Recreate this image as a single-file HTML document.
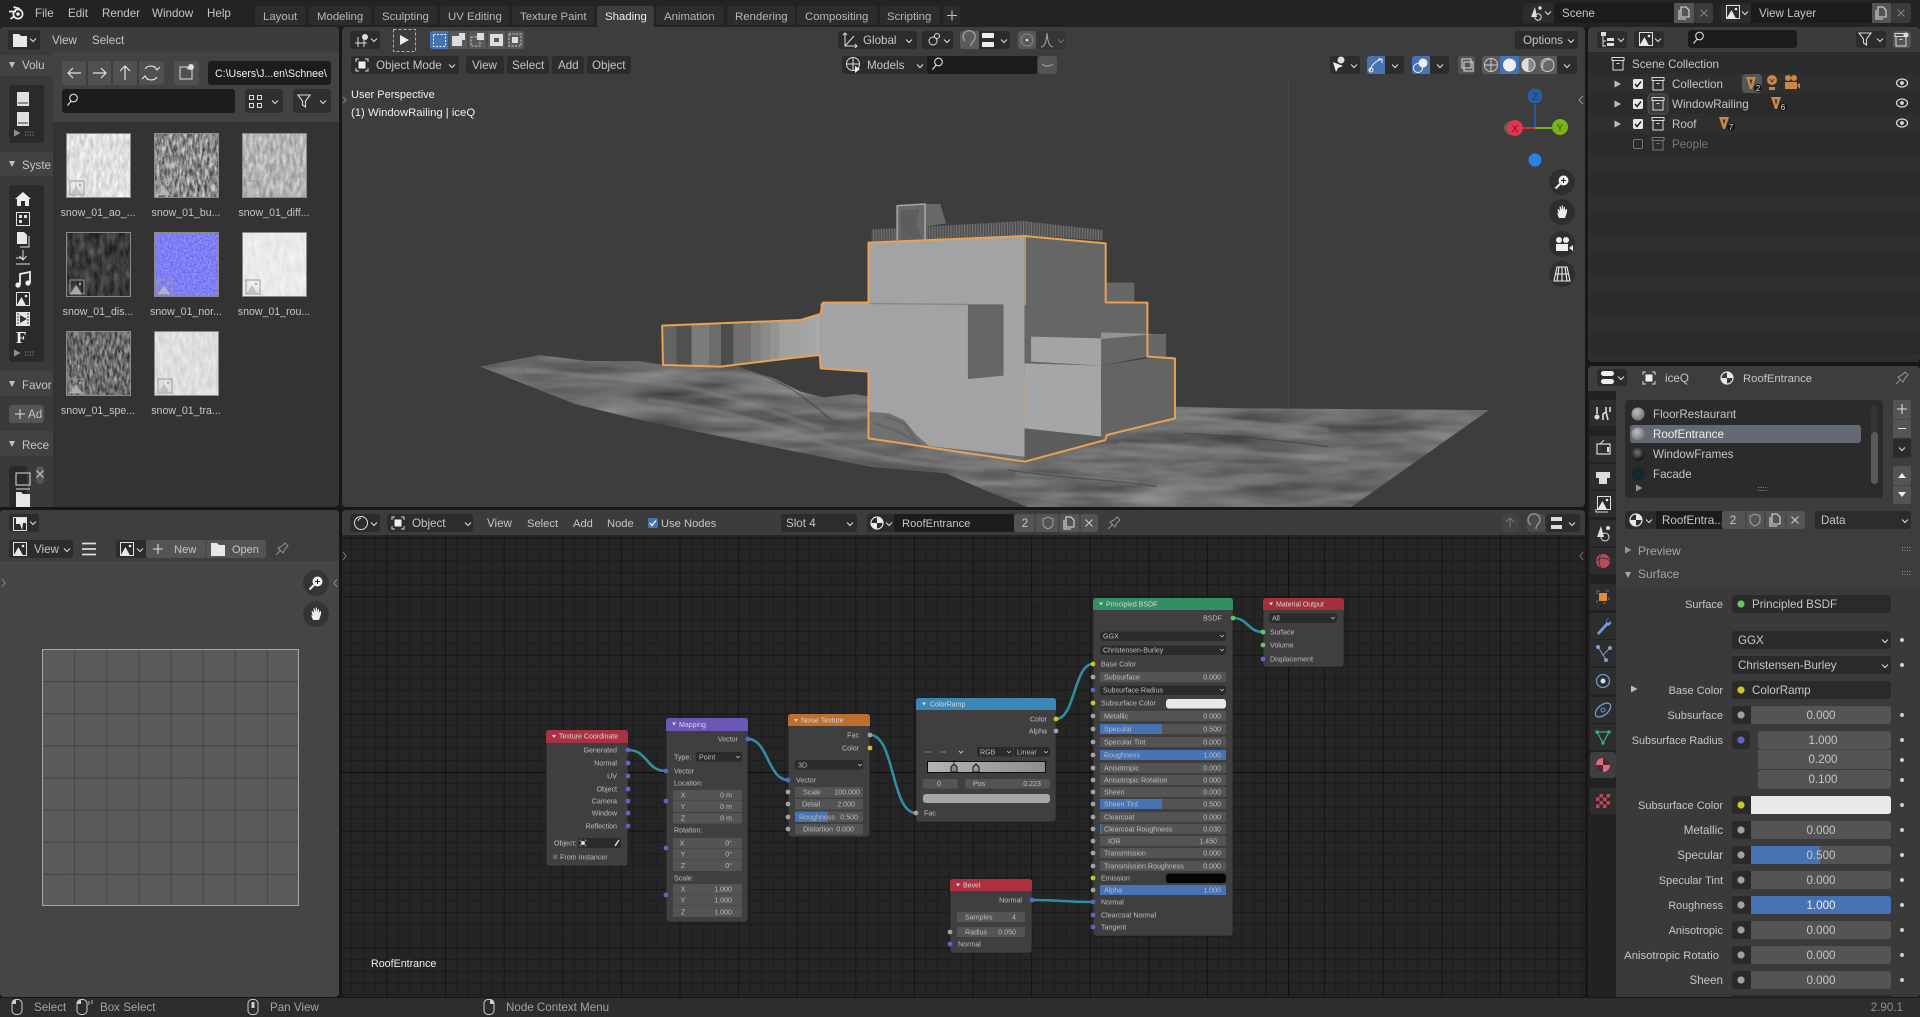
<!DOCTYPE html>
<html lang="en"><head><meta charset="utf-8"><title>Blender Shading</title>
<style>
html,body{margin:0;padding:0;background:#171717;overflow:hidden}
svg{display:block}
text{font-family:"Liberation Sans",sans-serif;font-size:11.6px;fill:#c6c6c6}
.w{fill:#efefef}.g{fill:#a4a4a4}.dim{fill:#777}
.e{text-anchor:end}.m{text-anchor:middle}
.n{font-size:7.1px;fill:#bdbdbd}
.nt{font-size:7px;fill:#d8d8d8}
.tl{font-size:11.4px;fill:#b8b8b8}
.pl text{font-size:11px}
.th text{font-size:10.6px}
.d{fill:#2a2a2a}.f{fill:#1c1c1c}.b{fill:#545454}.u{fill:#4772b3}
.nr{fill:#545454}.nd{fill:#2b2b2b}.nb{fill:#3f3f3f;stroke:#1a1a1a;stroke-width:.6}
.sg{fill:#a1a1a1}.sp{fill:#6363c7}.sy{fill:#c7c729}.sn{fill:#63c763}
.lk{fill:none;stroke:#2f8f9e;stroke-width:2.6}
</style></head><body>
<svg width="1920" height="1017" viewBox="0 0 1920 1017" xmlns="http://www.w3.org/2000/svg">
<defs>
<path id="ch" d="M-3-1.5 0 1.5 3-1.5" fill="none" stroke="#d0d0d0" stroke-width="1.2"/>
<g id="srch"><circle cx="1.5" cy="-2" r="3.8" fill="none" stroke="#d8d8d8" stroke-width="1.1"/><path d="M-.8 1-4.5 5.5" stroke="#d8d8d8" stroke-width="1.2"/></g>
<path id="fun" d="M-6-6H6L1.5 0V6L-1.5 4V0Z" fill="none" stroke="#d8d8d8" stroke-width="1.1"/>
<g id="col"><rect x="-6" y="-6.5" width="12" height="3" fill="none" stroke="#d8d8d8"/><path d="M-5-3.5V6H5V-3.5M-1.5-.5H1.5" fill="none" stroke="#d8d8d8"/></g>
<g id="cold" opacity=".45"><rect x="-6" y="-6.5" width="12" height="3" fill="none" stroke="#d8d8d8"/><path d="M-5-3.5V6H5V-3.5M-1.5-.5H1.5" fill="none" stroke="#d8d8d8"/></g>
<g id="copy"><path d="M-3-6H2L5-3V4H-3Z M-5-3V6H2" fill="none" stroke="#dcdcdc" stroke-width="1.1"/></g>
<path id="x" d="M-3.5-3.5 3.5 3.5M3.5-3.5-3.5 3.5" stroke="#c8c8c8" stroke-width="1.1"/>
<g id="obj"><path d="M-6-3V-6H-3M3-6H6V-3M6 3V6H3M-3 6H-6V3" fill="none" stroke="#dcdcdc" stroke-width="1"/><rect x="-3.5" y="-3.5" width="7" height="7" fill="#eee"/></g>
<g id="img"><rect x="-6.5" y="-6.5" width="13" height="13" fill="none" stroke="#e0e0e0"/><path d="M-6.5 6.5-1.5-2 3 6.5Z" fill="#e8e8e8"/><circle cx="3" cy="-3" r="1.3" fill="#e8e8e8"/></g>
<g id="mat"><circle r="6" fill="none" stroke="#e8e8e8" stroke-width="1.2"/><path d="M0-6A6 6 0 0 1 6 0H0V6A6 6 0 0 1-6 0H0Z" fill="#e8e8e8"/></g>
<g id="tri"><path d="M-5-6H5L1 6H-1Z" fill="#c98849"/><path d="M-1.5-3.5H1.5L0 2Z" fill="#3a3a3a"/></g>
<g id="eye"><ellipse rx="5.5" ry="4" fill="none" stroke="#dcdcdc" stroke-width="1.2"/><circle r="1.9" fill="#dcdcdc"/></g>
<g id="chk"><rect x="-5" y="-5" width="10" height="10" rx="1.5" fill="#e8e8e8"/><path d="M-3 0-1 2.5 3-2.5" fill="none" stroke="#222" stroke-width="1.5"/></g>
<path id="ar" d="M-3-3.5 3.5 0-3-3.5V3.5L3.5 0Z" fill="#bdbdbd"/>
<g id="grip" fill="#9a9a9a"><rect x="-5" y="-2" width="1" height="1"/><rect x="-2.5" y="-2" width="1" height="1"/><rect y="-2" width="1" height="1"/><rect x="2.5" y="-2" width="1" height="1"/><rect x="-5" y="1" width="1" height="1"/><rect x="-2.5" y="1" width="1" height="1"/><rect y="1" width="1" height="1"/><rect x="2.5" y="1" width="1" height="1"/></g>
<g id="mouse"><rect x="-5" y="-7.5" width="10" height="15" rx="4" fill="none" stroke="#cfcfcf"/><path d="M-4.5-3V-5Q-4.5-7-1-7V-3Z" fill="#cfcfcf"/></g>
<g id="pin"><path d="M-6 6-1 1M-4-1 1 4 3 0 6-3 3-6 0-3Z" fill="none" stroke="#8c8c8c" stroke-width="1.1"/></g>
<g id="shield"><path d="M0-6 5-4V0Q5 4 0 6-5 4-5 0V-4Z" fill="none" stroke="#a0a0a0" stroke-width="1"/></g>
<g id="hand"><path d="M-5 1-3 6H3L5 0V-3L4-3 3-1V-5L2-5 1-2V-6.5H0L-.5-2-1.5-6-2.5-5.5-2-1-3.5-3-4.5-2.5-3.5 2Z" fill="#eee"/></g>
<g id="zoomi"><circle cx="1.5" cy="-1.5" r="5" fill="#eee"/><path d="M1.5-4V1M-1-1.5H4" stroke="#222"/><path d="M-2 2-6.5 6.5" stroke="#eee" stroke-width="2"/></g>
<g id="tpl"><rect x="4" y="48" width="14" height="14" fill="none" stroke="#9a9a9a"/><path d="M4 62 10 53 16 62Z" fill="#bbb" opacity=".85"/><circle cx="14" cy="52" r="1.2" fill="#aaa"/></g>
<g id="pf"><rect x="1732" y="-9" width="24" height="18" rx="3" fill="#2a2a2a"/><path d="M1751-9H1888Q1891-9 1891-6V6Q1891 9 1888 9H1751Z" fill="#545454"/><circle cx="1741" r="3.6" fill="#a1a1a1"/><circle cx="1902" r="2" fill="#d0d0d0"/></g>
<pattern id="ngrid" patternUnits="userSpaceOnUse" x="503.7" y="772" width="58.6" height="58.6">
<rect width="58.6" height="58.6" fill="#252525"/>
<path d="M11.7 0V58.6M23.4 0V58.6M35.2 0V58.6M46.9 0V58.6M0 11.7H58.6M0 23.4H58.6M0 35.2H58.6M0 46.9H58.6" stroke="#1c1c1c" stroke-width="1"/>
<path d="M.5 0V58.6M0 .5H58.6" stroke="#141414" stroke-width="1"/></pattern>
<pattern id="imaj" patternUnits="userSpaceOnUse" x="42" y="649" width="32.12" height="32.12"><path d="M.5 0V32.12M0 .5H32.12" stroke="#434343" fill="none"/><path d="M8.5 0V32M16.5 0V32M24.5 0V32M0 8.500H32M0 16.500H32M0 24.500H32" stroke="#555" stroke-width=".6" fill="none"/></pattern>
<pattern id="rail" patternUnits="userSpaceOnUse" width="7" height="20"><rect width="7" height="20" fill="#505050"/><rect width="2.4" height="20" fill="#767676"/></pattern>
<linearGradient id="wing"><stop offset="0" stop-color="#636363"/><stop offset=".09" stop-color="#636363"/><stop offset=".09" stop-color="#505050"/><stop offset=".185" stop-color="#505050"/><stop offset=".185" stop-color="#7b7b7b"/><stop offset=".295" stop-color="#7b7b7b"/><stop offset=".295" stop-color="#6c6c6c"/><stop offset=".37" stop-color="#6c6c6c"/><stop offset=".37" stop-color="#4a4a4a"/><stop offset=".45" stop-color="#4f4f4f"/><stop offset=".45" stop-color="#707070"/><stop offset=".56" stop-color="#707070"/><stop offset=".56" stop-color="#7f7f7f"/><stop offset=".62" stop-color="#7f7f7f"/><stop offset=".62" stop-color="#8a8a8a"/><stop offset=".68" stop-color="#8a8a8a"/><stop offset=".68" stop-color="#949494"/><stop offset=".74" stop-color="#949494"/><stop offset=".74" stop-color="#a0a0a0"/><stop offset=".82" stop-color="#a0a0a0"/><stop offset="1" stop-color="#a8a9aa"/></linearGradient>
<linearGradient id="ramp"><stop offset="0" stop-color="#b4b4b4"/><stop offset="1" stop-color="#8e8e8e"/></linearGradient>
<filter id="terr" x="0" y="0" width="1" height="1" color-interpolation-filters="sRGB"><feTurbulence type="fractalNoise" baseFrequency="0.004 0.022" numOctaves="3" seed="7"/><feGaussianBlur stdDeviation="3 1.500"/><feColorMatrix values=".42 0 0 0 .21 .42 0 0 0 .21 .42 0 0 0 .21 0 0 0 0 1"/><feComposite in2="SourceAlpha" operator="in"/></filter>
<filter id="bl" x="-20%" y="-20%" width="140%" height="140%"><feGaussianBlur stdDeviation="1.3"/></filter>
<filter id="t1" x="0" y="0" width="1" height="1" color-interpolation-filters="sRGB"><feTurbulence type="fractalNoise" baseFrequency="0.3 0.1" numOctaves="4" seed="2"/><feColorMatrix values=".32 0 0 0 .72 .32 0 0 0 .72 .32 0 0 0 .72 0 0 0 0 1"/></filter>
<filter id="t2" x="0" y="0" width="1" height="1" color-interpolation-filters="sRGB"><feTurbulence type="fractalNoise" baseFrequency="0.4 0.13" numOctaves="4" seed="5"/><feColorMatrix values=".95 0 0 0 .07 .95 0 0 0 .07 .95 0 0 0 .07 0 0 0 0 1"/></filter>
<filter id="t3" x="0" y="0" width="1" height="1" color-interpolation-filters="sRGB"><feTurbulence type="fractalNoise" baseFrequency="0.3 0.11" numOctaves="4" seed="8"/><feColorMatrix values=".42 0 0 0 .5 .42 0 0 0 .5 .42 0 0 0 .5 0 0 0 0 1"/></filter>
<filter id="t4" x="0" y="0" width="1" height="1" color-interpolation-filters="sRGB"><feTurbulence type="fractalNoise" baseFrequency="0.2 0.07" numOctaves="4" seed="11"/><feColorMatrix values=".38 0 0 0 .04 .38 0 0 0 .04 .38 0 0 0 .04 0 0 0 0 1"/></filter>
<filter id="t5" x="0" y="0" width="1" height="1" color-interpolation-filters="sRGB"><feTurbulence type="fractalNoise" baseFrequency="0.5" numOctaves="2" seed="3"/><feColorMatrix values=".35 0 0 0 .32 .35 0 0 0 .32 .12 0 0 0 .9 0 0 0 0 1"/></filter>
<filter id="t6" x="0" y="0" width="1" height="1" color-interpolation-filters="sRGB"><feTurbulence type="fractalNoise" baseFrequency="0.2 0.08" numOctaves="3" seed="14"/><feColorMatrix values=".12 0 0 0 .86 .12 0 0 0 .86 .12 0 0 0 .86 0 0 0 0 1"/></filter>
<filter id="t7" x="0" y="0" width="1" height="1" color-interpolation-filters="sRGB"><feTurbulence type="fractalNoise" baseFrequency="0.4 0.13" numOctaves="4" seed="21"/><feColorMatrix values=".8 0 0 0 .02 .8 0 0 0 .02 .8 0 0 0 .02 0 0 0 0 1"/></filter>
<filter id="t8" x="0" y="0" width="1" height="1" color-interpolation-filters="sRGB"><feTurbulence type="fractalNoise" baseFrequency="0.25 0.09" numOctaves="3" seed="31"/><feColorMatrix values=".18 0 0 0 .78 .18 0 0 0 .78 .18 0 0 0 .78 0 0 0 0 1"/></filter>
<radialGradient id="sph" cx=".4" cy=".35" r=".7"><stop offset="0" stop-color="#c0c0c0"/><stop offset="1" stop-color="#707070"/></radialGradient>
<radialGradient id="sphd" cx=".45" cy=".4" r=".6"><stop offset="0" stop-color="#777"/><stop offset="1" stop-color="#111"/></radialGradient>
</defs>

<rect width="1920" height="1017" fill="#171717"/>
<!-- top bar -->
<rect width="1920" height="27" fill="#232323"/>
<g transform="translate(17,13)"><circle cx="1" cy="1" r="4.6" fill="none" stroke="#eee" stroke-width="1.7"/><circle cx="1" cy="1" r="1.8" fill="#eee"/><path d="M-8-1.5H-1M-3.5-6 3-4.2M-6.5 6-2.5 3" stroke="#eee" stroke-width="1.7" fill="none"/></g>
<text x="35" y="17">File</text><text x="68" y="17">Edit</text><text x="102" y="17">Render</text><text x="152" y="17">Window</text><text x="207" y="17">Help</text>
<g fill="#2c2c2c">
<rect x="255" y="6" width="51" height="19" rx="3"/><rect x="309" y="6" width="62" height="19" rx="3"/><rect x="374" y="6" width="63" height="19" rx="3"/><rect x="440" y="6" width="69" height="19" rx="3"/><rect x="512" y="6" width="82" height="19" rx="3"/><rect x="656" y="6" width="68" height="19" rx="3"/><rect x="727" y="6" width="68" height="19" rx="3"/><rect x="797" y="6" width="80" height="19" rx="3"/><rect x="880" y="6" width="60" height="19" rx="3"/><rect x="943" y="6" width="17" height="19" rx="3"/></g>
<path d="M597 27V9Q597 6 600 6H651Q654 6 654 9V27Z" fill="#3d3d3d"/>
<g><text class="tl" x="263" y="20">Layout</text><text class="tl" x="317" y="20">Modeling</text><text class="tl" x="382" y="20">Sculpting</text><text class="tl" x="448" y="20">UV Editing</text><text class="tl" x="520" y="20">Texture Paint</text><text class="w" x="605" y="20" style="font-size:11.4px">Shading</text><text class="tl" x="664" y="20">Animation</text><text class="tl" x="735" y="20">Rendering</text><text class="tl" x="805" y="20">Compositing</text><text class="tl" x="887" y="20">Scripting</text></g>
<path d="M947 15.5H957M952 10.500V20.500" stroke="#c0c0c0" stroke-width="1.1"/>
<!-- scene / view layer -->
<rect x="1523" y="3" width="31" height="20" rx="3" fill="#2c2c2c"/><rect x="1554" y="3" width="120" height="20" fill="#1c1c1c"/><rect x="1674" y="3" width="20" height="20" fill="#545454"/><rect x="1694" y="3" width="19" height="20" rx="3" fill="#3a3a3a"/>
<path d="M1531 17 1535 7 1537 17Z" fill="#ddd"/><circle cx="1540" cy="8" r="1.7" fill="#ddd"/><circle cx="1538" cy="17" r="3.2" fill="none" stroke="#ddd"/><use href="#ch" x="1548" y="13"/>
<text x="1562" y="17">Scene</text><use href="#copy" x="1684" y="13"/><use href="#x" x="1704" y="13" opacity=".5"/>
<rect x="1721" y="3" width="30" height="20" rx="3" fill="#2c2c2c"/><rect x="1751" y="3" width="121" height="20" fill="#1c1c1c"/><rect x="1872" y="3" width="19" height="20" fill="#545454"/><rect x="1891" y="3" width="20" height="20" rx="3" fill="#3a3a3a"/>
<use href="#img" x="1733" y="12"/><use href="#ch" x="1745" y="13"/><text x="1759" y="17">View Layer</text><use href="#copy" x="1881" y="13"/><use href="#x" x="1901" y="13" opacity=".5"/>

<!-- file browser -->
<rect x="0" y="27" width="339" height="480" rx="4" fill="#333"/>
<path d="M0 52V31Q0 27 4 27H335Q339 27 339 31V52Z" fill="#3c3c3c"/>
<rect x="8" y="30" width="32" height="20" rx="3" fill="#2c2c2c"/>
<path d="M13 36V34H19L21 36H27V47H13Z" fill="#e8e8e8"/><use href="#ch" x="33" y="40"/>
<text x="52" y="44">View</text><text x="92" y="44">Select</text>
<rect x="53" y="52" width="286" height="70" fill="#424242"/>
<rect x="0" y="52" width="53" height="455" fill="#3a3a3a"/>
<g fill="#424242"><rect y="55" width="53" height="21"/><rect y="152" width="53" height="24"/><rect y="371" width="53" height="25"/><rect y="431" width="53" height="25"/></g>
<path d="M9 62H15L12 68Z M9 161H15L12 167Z M9 381H15L12 387Z M9 441H15L12 447Z" fill="#c0c0c0"/>
<text x="22" y="69">Volu</text><text x="22" y="169">Syste</text><text x="22" y="389">Favor</text><text x="22" y="449">Rece</text>
<rect x="9" y="85" width="35" height="58" rx="3" fill="#2a2a2a"/>
<g fill="#e0e0e0"><path d="M17 92H29V106H17Z"/><path d="M17 112H29V126H17Z"/></g><path d="M18 103H28M18 123H28" stroke="#333"/>
<use href="#ar" x="17" y="133" opacity=".7"/><use href="#grip" x="30" y="133.500"/>
<rect x="9" y="185" width="35" height="177" rx="3" fill="#2a2a2a"/>
<path d="M23 192 31 199H29V206H25V201H21V206H17V199H15Z" fill="#eee"/>
<g fill="none" stroke="#e0e0e0"><rect x="16.500" y="212.500" width="13" height="13"/><path d="M16 258 23 258M23 250V260M19.500 256 23 260 26.500 256M16 264H30"/></g><path d="M19 215H22V218H19ZM19 220H22V223H19ZM24 215H27V218H24Z" fill="#e0e0e0"/>
<path d="M17 232H24L27 235V244H17Z" fill="#e8e8e8"/><path d="M29 236V247H20" fill="none" stroke="#e0e0e0"/>
<path d="M20 285V274L30 272V283" fill="none" stroke="#eee" stroke-width="1.8"/><circle cx="18" cy="285" r="2.600" fill="#eee"/><circle cx="28" cy="283" r="2.600" fill="#eee"/>
<use href="#img" x="23" y="299"/>
<rect x="16" y="312" width="14" height="14" fill="#e6e6e6"/><path d="M20 315V323L27 319Z" fill="#333"/><path d="M18 313V325M28 313V325" stroke="#333" stroke-dasharray="2 1"/>
<text x="16" y="343" style="font-family:'Liberation Serif',serif;font-size:17px;font-weight:bold" class="w">F</text>
<use href="#ar" x="17" y="353" opacity=".7"/><use href="#grip" x="30" y="353.500"/>
<rect x="9" y="405" width="35" height="18" rx="3" fill="#545454"/><path d="M15 414H25M20 409V419" stroke="#ddd"/><text x="28" y="418">Ad</text>
<rect x="9" y="466" width="18" height="41" rx="3" fill="#2a2a2a"/><rect x="36" y="466" width="8" height="18" rx="4" fill="#555"/><use href="#x" x="40" y="474"/>
<rect x="16" y="473" width="14" height="12" fill="none" stroke="#e0e0e0"/><path d="M16 489H30" stroke="#e0e0e0"/><path d="M16 494V492H21L23 494H30V507H16Z" fill="#e8e8e8"/>
<!-- path bar -->
<rect x="62" y="61" width="102" height="24" rx="3" fill="#505050"/><path d="M87 61V85M112 61V85M138 61V85" stroke="#2b2b2b"/>
<path d="M81 73H68M73 68 68 73 73 78M93 73H106M101 68 106 73 101 78M125 80V66M120 71 125 66 130 71" fill="none" stroke="#e0e0e0" stroke-width="1.200"/>
<path d="M145 69A7 7 0 0 1 157 70M157 77A7 7 0 0 1 145 76M154 66 157 70 160 67M148 80 145 76 142 79" fill="none" stroke="#e0e0e0" stroke-width="1.100"/>
<rect x="174" y="61" width="25" height="24" rx="3" fill="#505050"/><path d="M180 67H187L188 69H192V79H180Z" fill="none" stroke="#ddd"/><circle cx="191" cy="67" r="3" fill="#ddd"/>
<rect x="208" y="61" width="123" height="24" rx="3" fill="#1c1c1c"/><text x="215" y="77" class="w" style="font-size:10.600px">C:\Users\J...en\Schnee\</text>
<rect x="62" y="89" width="173" height="24" rx="3" fill="#1c1c1c"/><use href="#srch" x="72" y="100"/>
<rect x="245" y="89" width="38" height="24" rx="3" fill="#303030"/><g fill="none" stroke="#ddd"><rect x="249.500" y="95.500" width="4" height="4"/><rect x="257.500" y="95.500" width="4" height="4"/><rect x="249.500" y="103.500" width="4" height="4"/><rect x="257.500" y="103.500" width="4" height="4"/></g><use href="#ch" x="275" y="102"/>
<rect x="293" y="89" width="38" height="24" rx="3" fill="#303030"/><use href="#fun" x="304" y="101"/><use href="#ch" x="323" y="102"/>
<!-- thumbs -->
<g>
<rect x="66" y="133" width="65" height="65" filter="url(#t1)"/><rect x="154" y="133" width="65" height="65" filter="url(#t2)"/><rect x="242" y="133" width="65" height="65" filter="url(#t3)"/>
<rect x="66" y="232" width="65" height="65" filter="url(#t4)"/><rect x="154" y="232" width="65" height="65" filter="url(#t5)"/><rect x="242" y="232" width="65" height="65" filter="url(#t6)"/>
<rect x="66" y="331" width="65" height="65" filter="url(#t7)"/><rect x="154" y="331" width="65" height="65" filter="url(#t8)"/>
</g>
<g fill="none" stroke="#8a8a8a"><rect x="66.500" y="133.500" width="64" height="64"/><rect x="154.500" y="133.500" width="64" height="64"/><rect x="242.500" y="133.500" width="64" height="64"/><rect x="66.500" y="232.500" width="64" height="64"/><rect x="154.500" y="232.500" width="64" height="64"/><rect x="242.500" y="232.500" width="64" height="64"/><rect x="66.500" y="331.500" width="64" height="64"/><rect x="154.500" y="331.500" width="64" height="64"/></g>
<use href="#tpl" x="66" y="133"/><use href="#tpl" x="154" y="133"/><use href="#tpl" x="242" y="133"/><use href="#tpl" x="66" y="232"/><use href="#tpl" x="154" y="232"/><use href="#tpl" x="242" y="232"/><use href="#tpl" x="66" y="331"/><use href="#tpl" x="154" y="331"/>
<g class="th"><text class="m" x="98" y="216">snow_01_ao_...</text><text class="m" x="186" y="216">snow_01_bu...</text><text class="m" x="274" y="216">snow_01_diff...</text><text class="m" x="98" y="315">snow_01_dis...</text><text class="m" x="186" y="315">snow_01_nor...</text><text class="m" x="274" y="315">snow_01_rou...</text><text class="m" x="98" y="414">snow_01_spe...</text><text class="m" x="186" y="414">snow_01_tra...</text></g>

<!-- 3D viewport -->
<clipPath id="vp"><rect x="342" y="27" width="1243" height="480" rx="4"/></clipPath>
<g clip-path="url(#vp)">
<rect x="342" y="27" width="1243" height="480" fill="#3d3d3d"/>
<path d="M1288.500 80V507" stroke="#454545"/>
<g transform="translate(640,190) scale(.38265,.33333)">
<path d="M-418 530-264 495-136 513 0 513 60 525 260 530 350 565 420 605 480 622 560 612 600 620 1398 650 1568 655 2219 660 1848 960 1032 960 900 900 800 850 600 830 300 760 0 690-170 642Z" fill="#707070" filter="url(#terr)"/>
<path d="M-300 540Q-100 560 120 590 300 640 480 720M20 630Q250 660 480 760 700 830 900 840M1420 680Q1600 700 1800 720M1250 760Q1500 780 1850 810M980 850Q1150 860 1300 880" fill="none" stroke="#8d8d8d" stroke-width="14" opacity=".35" filter="url(#bl)"/>
<path d="M265 532Q330 555 400 600 450 640 500 690M960 840Q1080 860 1200 870 1300 880 1350 890M1420 730Q1600 740 1800 770" fill="none" stroke="#3e3e3e" stroke-width="4" opacity=".6"/>
<path d="M605 118 670 115 1000 93 1210 120V152L1005 135 605 155Z" fill="url(#rail)"/>
<path d="M672 47 745 42 785 42 800 100 745 110V150H672Z" fill="#696969"/>
<path d="M682 62 730 58 722 100 738 150H682Z" fill="#5d5d5d"/>
<path d="M672 150V47L745 42V150" fill="none" stroke="#a9a9a9" stroke-width="1.500" vector-effect="non-scaling-stroke"/>
<path d="M1217 278H1292V338H1217Z" fill="#676767"/>
<path d="M1326 432H1375V500H1326Z" fill="#676767"/>
<path d="M472 340 597 337V158L1005 138V810L597 745V545L472 535Z" fill="#a1a3a4"/>
<path d="M1005 138 1217 160V337L1326 338V500L1205 527 1005 520Z" fill="#666"/>
<path d="M1005 520 1205 527V740L1005 715Z" fill="#a4a6a7"/>
<path d="M1205 527 1326 505 1398 505V685L1220 735 1205 740Z" fill="#646464"/>
<path d="M1022 440 1205 445V527L1022 515Z" fill="#a2a4a5"/>
<path d="M1205 427 1345 432 1205 447Z" fill="#949494"/>
<path d="M1005 715 1205 740 1216 750 1005 812Z" fill="#5d5d5d"/>
<path d="M857 343H950V557L857 567Z" fill="#656565"/>
<path d="M600 341 857 343" stroke="#7e7e7e" stroke-width="1" vector-effect="non-scaling-stroke"/>
<path d="M58 407 420 390 472 372V495L390 505 210 530 60 525Z" fill="url(#wing)"/>
<path d="M597 665 650 670 690 690 722 735 755 768 1005 800V812L597 745Z" fill="#707070"/>
<path d="M640 680 690 700 720 750M610 700Q680 720 740 770" stroke="#5a5a5a" stroke-width="5" fill="none" opacity=".6"/>
<path d="M58 407 420 390 472 372 478 338 597 337V158L1005 138 1217 160V337L1326 338V500L1398 505V685L1220 735 1216 750 1005 815 597 745V545L472 535 470 495 390 505 210 530 60 525Z" fill="none" stroke="#e8a155" stroke-width="2" stroke-linejoin="round" vector-effect="non-scaling-stroke"/>
<path d="M1007 138V345M1007 560V690" stroke="#e8a155" stroke-width="1.200" vector-effect="non-scaling-stroke" opacity=".9"/>
</g>
<!-- viewport text -->
<text class="w" x="351" y="98" style="font-size:11px">User Perspective</text><text class="w" x="351" y="116" style="font-size:11.300px">(1) WindowRailing | iceQ</text>
<path d="M343 97l3 3-3 3" stroke="#888" fill="none"/>
<!-- header row 1 -->
<rect x="350" y="31" width="30" height="18" rx="3" fill="#2c2c2c"/>
<path d="M355 43H367M358 37V47M364 37V47" stroke="#ddd"/><circle cx="365" cy="37" r="3" fill="#ddd"/><use href="#ch" x="374" y="40"/>
<rect x="393.500" y="29.500" width="22" height="22" fill="none" stroke="#e9a84f" stroke-dasharray="3 2"/><path d="M400 35V45L409 40Z" fill="#eee"/>
<rect x="430" y="31" width="94" height="18" rx="3" fill="#595959"/><path d="M433 31H449V49H433Q430 49 430 46V34Q430 31 433 31Z" fill="#4772b3"/>
<path d="M449 31V49M468 31V49M487 31V49M506 31V49" stroke="#3a3a3a"/>
<rect x="433.500" y="34.500" width="12" height="12" fill="none" stroke="#eee" stroke-dasharray="2 1.500"/>
<path d="M452 36H459V33H465V40H462V46H452Z" fill="#ddd"/>
<rect x="471" y="37" width="9" height="9" fill="none" stroke="#ccc" stroke-dasharray="2 1.500"/><rect x="477" y="33" width="7" height="7" fill="#ddd"/>
<rect x="490" y="34" width="13" height="12" fill="#ddd"/><rect x="494" y="38" width="5" height="4" fill="#595959"/>
<rect x="509" y="34" width="12" height="12" fill="none" stroke="#ccc" stroke-dasharray="2 1.500"/><rect x="512" y="37" width="6" height="6" fill="#ddd"/>
<rect x="838" y="31" width="79" height="18" rx="3" fill="#2c2c2c"/><path d="M845 33V46H857M845 46 854 36M843 35 845 33 847 35M855 44 857 46 855 48" fill="none" stroke="#ddd"/><text x="863" y="44">Global</text><use href="#ch" x="909" y="41"/>
<rect x="922" y="31" width="31" height="18" rx="3" fill="#2c2c2c"/><circle cx="933" cy="41" r="4" fill="none" stroke="#ddd"/><circle cx="937" cy="36" r="2.500" fill="none" stroke="#ddd"/><use href="#ch" x="947" y="41"/>
<rect x="960" y="31" width="50" height="18" rx="3" fill="#2c2c2c"/><path d="M963 31H979V49H963Q960 49 960 46V34Q960 31 963 31Z" fill="#5c5c5c"/><path d="M965 41A6 6 0 1 1 975 38C975 41 971 42 971 46" fill="none" stroke="#a0a0a0" stroke-width="1.300"/><rect x="982" y="33" width="12" height="5" fill="#eee"/><rect x="982" y="42" width="12" height="5" fill="#eee"/><use href="#ch" x="1004" y="41"/>
<rect x="1018" y="31" width="18" height="18" rx="3" fill="#595959"/><circle cx="1027" cy="40" r="6" fill="none" stroke="#888" stroke-width="1.100"/><circle cx="1027" cy="40" r="1.300" fill="#ddd"/>
<rect x="1036" y="31" width="30" height="18" rx="3" fill="#363636"/><path d="M1041 47Q1046 47 1047 33 1048 47 1053 47" fill="none" stroke="#aaa"/><use href="#ch" x="1061" y="41" opacity=".35"/>
<rect x="1515" y="31" width="63" height="18" rx="3" fill="#2c2c2c"/><text x="1523" y="44">Options</text><use href="#ch" x="1571" y="41"/>
<!-- header row 2 -->
<rect x="351" y="56" width="108" height="18" rx="3" fill="#2c2c2c"/><use href="#obj" x="362" y="65"/><text x="376" y="69">Object Mode</text><use href="#ch" x="452" y="66"/>
<rect x="466" y="56" width="38" height="18" rx="3" fill="#2c2c2c"/><text x="472" y="69">View</text>
<rect x="507" y="56" width="42" height="18" rx="3" fill="#2c2c2c"/><text x="512" y="69">Select</text>
<rect x="552" y="56" width="32" height="18" rx="3" fill="#2c2c2c"/><text x="558" y="69">Add</text>
<rect x="587" y="56" width="44" height="18" rx="3" fill="#2c2c2c"/><text x="592" y="69">Object</text>
<rect x="842" y="56" width="85" height="18" rx="3" fill="#2c2c2c"/><circle cx="853" cy="64" r="6.500" fill="none" stroke="#ddd"/><path d="M846.500 64H859.500M853 57.500V70.500" stroke="#ddd"/><path d="M855 66V73L860 69Z" fill="#eee"/><text x="867" y="69">Models</text><use href="#ch" x="920" y="66"/>
<rect x="927" y="56" width="110" height="18" fill="#1c1c1c"/><use href="#srch" x="937" y="64"/>
<rect x="1038" y="56" width="19" height="18" rx="3" fill="#545454"/><path d="M1042 64Q1047 68 1053 64" fill="none" stroke="#aaa"/>
<rect x="1330" y="56" width="30" height="18" rx="3" fill="#2c2c2c"/><circle cx="1341" cy="60" r="3.500" fill="#ddd"/><path d="M1333 62 1343 66 1338 68 1336 72Z" fill="#eee"/><use href="#ch" x="1354" y="66"/>
<rect x="1367" y="56" width="37" height="18" rx="3" fill="#2c2c2c"/><path d="M1370 56H1385V74H1370Q1367 74 1367 71V59Q1367 56 1370 56Z" fill="#4772b3"/><path d="M1370 71Q1372 62 1382 59M1382 59H1378M1382 59V63" fill="none" stroke="#eee"/><circle cx="1371" cy="70" r="2" fill="none" stroke="#eee"/><use href="#ch" x="1395" y="66"/>
<rect x="1412" y="56" width="37" height="18" rx="3" fill="#2c2c2c"/><path d="M1415 56H1430V74H1415Q1412 74 1412 71V59Q1412 56 1415 56Z" fill="#4772b3"/><circle cx="1423" cy="63" r="4.500" fill="#eee"/><circle cx="1418" cy="68" r="4.500" fill="none" stroke="#eee"/><use href="#ch" x="1440" y="66"/>
<rect x="1458" y="56" width="17" height="18" rx="3" fill="#545454"/><rect x="1462" y="59" width="9" height="9" fill="none" stroke="#ddd"/><rect x="1464" y="62" width="9" height="9" fill="none" stroke="#ddd"/>
<rect x="1482" y="56" width="95" height="18" rx="3" fill="#2c2c2c"/><path d="M1485 56H1557V74H1485Q1482 74 1482 71V59Q1482 56 1485 56Z" fill="#595959"/><rect x="1500" y="56" width="19" height="18" fill="#4772b3"/>
<circle cx="1491" cy="65" r="6.500" fill="none" stroke="#ccc"/><path d="M1484.500 65H1497.500M1491 58.500V71.500" stroke="#ccc"/><circle cx="1509.500" cy="65" r="6.500" fill="#f0f0f0"/>
<circle cx="1528.500" cy="65" r="6.500" fill="#888" stroke="#ddd"/><path d="M1528.500 58.500A6.500 6.500 0 0 0 1528.500 71.500Z" fill="#ddd"/><circle cx="1547.500" cy="65" r="6.500" fill="#666" stroke="#ccc"/><path d="M1543 68A6 6 0 0 1 1550 60" fill="none" stroke="#ccc"/>
<use href="#ch" x="1567" y="66"/>
<!-- gizmo -->
<path d="M1535 128V104" stroke="#2a5a9a" stroke-width="2"/><path d="M1535 128H1520" stroke="#c33" stroke-width="2"/><path d="M1535 128H1552" stroke="#7ab317" stroke-width="2"/>
<circle cx="1511" cy="128" r="7" fill="#6e5a4a"/><circle cx="1535" cy="96" r="7.500" fill="#2c5d9e"/><circle cx="1515" cy="128" r="8" fill="#e0364e"/><circle cx="1560" cy="127" r="8" fill="#79b516"/><circle cx="1535" cy="160" r="6.500" fill="#2a80e4"/>
<text class="m" x="1535" y="100" style="font-size:10px;fill:#1a3a66">Z</text><text class="m" x="1515" y="132" style="font-size:10px;fill:#7a1020">X</text><text class="m" x="1560" y="131" style="font-size:10px;fill:#3c5c08">Y</text>
<g fill="#2e2e2e"><circle cx="1562" cy="182" r="13"/><circle cx="1562" cy="212" r="13"/><circle cx="1562" cy="244" r="13"/><circle cx="1562" cy="274" r="13"/></g>
<use href="#zoomi" x="1562" y="182"/><use href="#hand" x="1562" y="212"/>
<g fill="#eee"><circle cx="1559" cy="240" r="3"/><circle cx="1566" cy="240" r="3"/><rect x="1556" y="244" width="12" height="7"/><path d="M1569 248 1573 245V251Z"/></g>
<path d="M1557 267H1567L1570 281H1554ZM1562 267V281M1555.500 274H1568.500M1559 267 1557 281M1565 267 1567 281" fill="none" stroke="#eee" stroke-width="1.100"/>
<path d="M1583 96 1579 100 1583 104" stroke="#999" fill="none"/>
</g>

<!-- outliner -->
<clipPath id="ol"><rect x="1588" y="27" width="332" height="335" rx="4"/></clipPath>
<g clip-path="url(#ol)">
<rect x="1588" y="27" width="332" height="335" fill="#2b2b2b"/>
<rect x="1588" y="27" width="332" height="25" fill="#3c3c3c"/>
<g fill="#2f2f2f"><rect x="1588" y="74" width="332" height="20"/><rect x="1588" y="114" width="332" height="20"/><rect x="1588" y="154" width="332" height="20"/><rect x="1588" y="194" width="332" height="20"/><rect x="1588" y="234" width="332" height="20"/><rect x="1588" y="274" width="332" height="20"/><rect x="1588" y="314" width="332" height="20"/><rect x="1588" y="354" width="332" height="20"/></g>
</g>
<rect x="1597" y="31" width="30" height="17" rx="3" fill="#2c2c2c"/><rect x="1601" y="32" width="5" height="4" fill="#ddd"/><path d="M1603 36V46H1606M1603 41H1606" stroke="#ddd" fill="none"/><rect x="1607" y="38" width="7" height="3" fill="#ddd"/><rect x="1607" y="43" width="7" height="3" fill="#ddd"/><use href="#ch" x="1621" y="40"/>
<rect x="1634" y="31" width="30" height="17" rx="3" fill="#2c2c2c"/><use href="#img" x="1646" y="39"/><use href="#ch" x="1658" y="40"/>
<rect x="1688" y="30" width="109" height="18" rx="3" fill="#1c1c1c"/><use href="#srch" x="1698" y="38"/>
<rect x="1856" y="31" width="30" height="17" rx="3" fill="#2c2c2c"/><use href="#fun" x="1865" y="39"/><use href="#ch" x="1880" y="40"/>
<rect x="1893" y="31" width="18" height="17" rx="3" fill="#545454"/><use href="#col" x="1901" y="40"/><circle cx="1906" cy="35" r="2.500" fill="#ddd"/>
<use href="#col" x="1618" y="64"/><text x="1632" y="68">Scene Collection</text>
<use href="#ar" x="1617.500" y="84"/><use href="#ar" x="1617.500" y="104"/><use href="#ar" x="1617.500" y="124"/>
<use href="#chk" x="1638" y="84"/><use href="#chk" x="1638" y="104"/><use href="#chk" x="1638" y="124"/><rect x="1633.500" y="139.500" width="9" height="9" rx="1.500" fill="none" stroke="#777"/>
<rect x="1648" y="94" width="20" height="20" rx="4" fill="#3a3a3a" stroke="#555"/>
<use href="#col" x="1658" y="84"/><use href="#col" x="1658" y="104"/><use href="#col" x="1658" y="124"/><use href="#cold" x="1658" y="144"/>
<text x="1672" y="88">Collection</text><text x="1672" y="108">WindowRailing</text><text x="1672" y="128">Roof</text><text class="dim" x="1672" y="148">People</text>
<rect x="1742" y="74" width="20" height="19" rx="4" fill="#555"/>
<use href="#tri" x="1751" y="83"/><use href="#tri" x="1776" y="103"/><use href="#tri" x="1724" y="123"/>
<circle cx="1758" cy="88" r="4" fill="#161616"/><circle cx="1783" cy="107" r="4" fill="#161616"/><circle cx="1731" cy="127" r="4" fill="#161616"/>
<text class="m" x="1758" y="91" style="font-size:8px;fill:#ddd">2</text><text class="m" x="1783" y="110" style="font-size:8px;fill:#ddd">6</text><text class="m" x="1731" y="130" style="font-size:8px;fill:#ddd">7</text>
<circle cx="1772" cy="80" r="5" fill="#c98849"/><path d="M1769 87H1775V90H1769Z" fill="#c98849"/><path d="M1770 79 1772 82 1774 79" stroke="#3a3a3a" fill="none"/>
<circle cx="1788" cy="78" r="3" fill="#c98849"/><circle cx="1794" cy="78" r="3" fill="#c98849"/><rect x="1785" y="82" width="12" height="7" fill="#c98849"/><path d="M1797 85 1800 83V89Z" fill="#c98849"/>
<use href="#eye" x="1902" y="83"/><use href="#eye" x="1902" y="103"/><use href="#eye" x="1902" y="123"/>

<!-- properties -->
<clipPath id="pr"><rect x="1588" y="366" width="332" height="631" rx="4"/></clipPath>
<g clip-path="url(#pr)">
<rect x="1588" y="366" width="332" height="631" fill="#3d3d3d"/>
<rect x="1588" y="391" width="28" height="606" fill="#222"/>
<g fill="#2d2d2d"><rect x="1590" y="400" width="26" height="26"/><rect x="1590" y="436" width="26" height="26"/><rect x="1590" y="464" width="26" height="26"/><rect x="1590" y="491" width="26" height="26"/><rect x="1590" y="520" width="26" height="26"/><rect x="1590" y="548" width="26" height="26"/><rect x="1590" y="584" width="26" height="26"/><rect x="1590" y="613" width="26" height="26"/><rect x="1590" y="640" width="26" height="26"/><rect x="1590" y="668" width="26" height="26"/><rect x="1590" y="697" width="26" height="26"/><rect x="1590" y="724" width="26" height="26"/><rect x="1590" y="788" width="26" height="26"/></g>
<rect x="1590" y="752" width="26" height="26" rx="3" fill="#3f3f3f"/>
<rect x="1616" y="587" width="304" height="410" fill="#3a3a3a"/>
</g>
<use href="#obj" x="1649" y="378"/><text x="1665" y="382">iceQ</text><use href="#mat" x="1727" y="378"/><text x="1743" y="382" style="font-size:11.300px">RoofEntrance</text><use href="#pin" x="1902" y="378"/>
<rect x="1597" y="369" width="30" height="17" rx="3" fill="#2c2c2c"/><rect x="1601" y="371" width="13" height="5" rx="2.500" fill="#eee"/><rect x="1601" y="379" width="13" height="5" rx="2.500" fill="#eee"/><use href="#ch" x="1621" y="378"/>
<!-- tab icons -->
<path d="M1597 407V414M1606 407V412L1603 414 1603 420M1606 412 1608 420M1610 407V412" stroke="#ddd" stroke-width="1.600" fill="none"/><circle cx="1597" cy="417" r="2.500" fill="#ddd"/>
<rect x="1597" y="444" width="13" height="10" fill="none" stroke="#ddd" stroke-width="1.200"/><path d="M1600 444 1604 440" stroke="#ddd"/><path d="M1607 447H1609V452H1607Z" fill="#ddd"/>
<path d="M1596 472H1610V478H1607V484H1599V478H1596Z" fill="#ddd"/>
<use href="#img" x="1604" y="503"/><path d="M1596 509V512H1608" stroke="#ddd" fill="none"/>
<path d="M1597 537 1601 526 1604 537Z" fill="#ddd"/><circle cx="1608" cy="528" r="2" fill="#ddd"/><circle cx="1605" cy="537" r="4" fill="none" stroke="#ddd"/>
<circle cx="1603" cy="561" r="7" fill="#b54c5c"/><path d="M1596 561Q1603 555 1610 561M1601 554Q1597 561 1601 568" stroke="#3a3a3a" fill="none"/>
<path d="M1597 591H1609V603H1597Z" fill="none" stroke="#8a6a4a" stroke-dasharray="3 6"/><rect x="1599" y="593" width="8" height="8" fill="#e08b40"/>
<path d="M1597 633 1606 623A4 4 0 0 1 1609 618L1606 621 1608 623 1611 621A4 4 0 0 1 1607 626L1599 635Z" fill="#6f9bd8"/>
<path d="M1598 647 1603 655 1610 648M1603 655 1606 660" stroke="#7fa0c8" fill="none"/><g fill="#7fa0c8"><circle cx="1598" cy="647" r="2"/><circle cx="1610" cy="648" r="2"/><circle cx="1606" cy="660" r="2"/></g>
<circle cx="1603" cy="681" r="6.500" fill="none" stroke="#6f9bd8" stroke-width="1.300"/><circle cx="1603" cy="681" r="2.500" fill="#cde"/>
<g transform="rotate(-40 1603 710)"><ellipse cx="1603" cy="710" rx="9" ry="5" fill="none" stroke="#6f9bd8" stroke-width="1.300"/><circle cx="1603" cy="710" r="2" fill="none" stroke="#6f9bd8"/></g>
<path d="M1597 732H1609L1603 743Z" fill="none" stroke="#3cb08c" stroke-width="1.200"/><g fill="#3cb08c"><rect x="1595.500" y="730.500" width="3" height="3"/><rect x="1607.500" y="730.500" width="3" height="3"/><rect x="1601.500" y="741.500" width="3" height="3"/></g>
<circle cx="1603" cy="765" r="7" fill="#e06b7c"/><path d="M1603 765V772A7 7 0 0 1 1596 765ZM1603 765H1610A7 7 0 0 0 1603 758Z" fill="#4a2a30"/>
<rect x="1596" y="794" width="14" height="14" fill="#b54c5c"/><path d="M1596 794h3.500v3.500h-3.500zM1603 794h3.500v3.500h-3.500zM1599.500 797.500h3.500v3.500h-3.500zM1606.500 797.500h3.500v3.500h-3.500zM1596 801h3.500v3.500h-3.500zM1603 801h3.500v3.500h-3.500zM1599.500 804.500h3.500v3.500h-3.500zM1606.500 804.500h3.500v3.500h-3.500z" fill="#3a2226"/>
<!-- material list -->
<rect x="1625" y="400" width="258" height="98" rx="4" fill="#2b2b2b"/>
<rect x="1630" y="425" width="231" height="18" rx="3" fill="#646a73"/>
<circle cx="1638" cy="414" r="6.500" fill="url(#sph)"/><circle cx="1638" cy="434" r="6.500" fill="url(#sph)"/><circle cx="1638" cy="454" r="6.500" fill="url(#sphd)"/><circle cx="1638" cy="474" r="6.500" fill="#15262e"/>
<text x="1653" y="418">FloorRestaurant</text><text class="w" x="1653" y="438">RoofEntrance</text><text x="1653" y="458">WindowFrames</text><text x="1653" y="478">Facade</text>
<rect x="1871" y="405" width="7" height="79" rx="3.500" fill="#333"/><rect x="1871" y="432" width="7" height="52" rx="3.500" fill="#5a5a5a"/>
<use href="#ar" x="1639" y="488" opacity=".7"/><use href="#grip" x="1763" y="489"/>
<rect x="1893" y="400" width="18" height="19" rx="2" fill="#545454"/><rect x="1893" y="419.500" width="18" height="18.500" fill="#545454"/><rect x="1893" y="438.500" width="18" height="19" rx="2" fill="#2b2b2b"/>
<path d="M1897 409H1907M1902 404V414M1898 428.500H1906" stroke="#ddd" stroke-width="1.100"/><use href="#ch" x="1902" y="449"/>
<rect x="1893" y="466" width="18" height="19" rx="2" fill="#545454"/><rect x="1893" y="485.500" width="18" height="18.500" rx="2" fill="#545454"/>
<path d="M1898 478 1902 473 1906 478ZM1898 492 1906 492 1902 497Z" fill="#eee"/>
<!-- slot row -->
<rect x="1625" y="511" width="31" height="18" rx="3" fill="#2c2c2c"/><use href="#mat" x="1636" y="520"/><use href="#ch" x="1649" y="521"/>
<rect x="1656" y="511" width="66" height="18" fill="#1c1c1c"/><text x="1662" y="524">RoofEntra...</text>
<rect x="1722" y="511" width="83" height="18" rx="3" fill="#545454"/><path d="M1746 511V529M1765 511V529M1786 511V529" stroke="#3a3a3a"/><text class="m" x="1733" y="524">2</text><use href="#shield" x="1755" y="520"/><use href="#copy" x="1775" y="520"/><use href="#x" x="1795" y="520"/>
<rect x="1815" y="511" width="96" height="18" rx="3" fill="#2c2c2c"/><text x="1821" y="524">Data</text><use href="#ch" x="1905" y="521"/>
<use href="#ar" x="1628" y="550" opacity=".7"/><text class="g" x="1638" y="555" style="font-size:12px">Preview</text><use href="#grip" x="1907" y="549"/>
<path d="M1625 572H1631L1628 578Z" fill="#aaa"/><text class="g" x="1638" y="578" style="font-size:12px">Surface</text><use href="#grip" x="1907" y="573"/>
<!-- surface rows -->
<g class="pl">
<text class="e" x="1723" y="608">Surface</text>
<text class="e" x="1723" y="694">Base Color</text>
<text class="e" x="1723" y="719">Subsurface</text>
<text class="e" x="1723" y="744" style="font-size:10.800px">Subsurface Radius</text>
<text class="e" x="1723" y="809">Subsurface Color</text>
<text class="e" x="1723" y="834" style="font-size:11.600px">Metallic</text>
<text class="e" x="1723" y="859" style="font-size:11.600px">Specular</text>
<text class="e" x="1723" y="884">Specular Tint</text>
<text class="e" x="1723" y="909" style="font-size:10.800px">Roughness</text>
<text class="e" x="1723" y="934">Anisotropic</text>
<text class="e" x="1719" y="959" style="font-size:11.300px">Anisotropic Rotatio</text>
<text class="e" x="1723" y="984" style="font-size:11.600px">Sheen</text>
</g>
<rect x="1732" y="595" width="159" height="18" rx="3" fill="#2a2a2a"/><circle cx="1741" cy="604" r="3.600" class="sn"/><text x="1752" y="608">Principled BSDF</text>
<rect x="1732" y="631" width="159" height="18" rx="3" fill="#2a2a2a"/><text x="1738" y="644">GGX</text><use href="#ch" x="1885" y="641"/><circle cx="1902" cy="640" r="2" fill="#d0d0d0"/>
<rect x="1732" y="656" width="159" height="18" rx="3" fill="#2a2a2a"/><text x="1738" y="669">Christensen-Burley</text><use href="#ch" x="1885" y="666"/><circle cx="1902" cy="665" r="2" fill="#d0d0d0"/>
<use href="#ar" x="1634" y="689"/>
<rect x="1732" y="681" width="159" height="18" rx="3" fill="#2a2a2a"/><circle cx="1741" cy="690" r="3.600" class="sy"/><text x="1752" y="694">ColorRamp</text>
<use href="#pf" y="715"/><text class="m" x="1821" y="719">0.000</text>
<rect x="1732" y="731" width="18" height="18" rx="3" fill="#2a2a2a"/><circle cx="1741" cy="740" r="3.600" class="sp"/>
<rect x="1758" y="731" width="133" height="18.500" rx="3" fill="#545454"/><rect x="1758" y="750" width="133" height="19" fill="#545454"/><rect x="1758" y="770" width="133" height="19" rx="3" fill="#545454"/>
<text class="m" x="1823" y="744">1.000</text><text class="m" x="1823" y="763">0.200</text><text class="m" x="1823" y="783">0.100</text>
<g fill="#d0d0d0"><circle cx="1902" cy="740" r="2"/><circle cx="1902" cy="760" r="2"/><circle cx="1902" cy="780" r="2"/><circle cx="1902" cy="805" r="2"/></g>
<rect x="1732" y="796" width="24" height="18" rx="3" fill="#2a2a2a"/><path d="M1751 796H1888Q1891 796 1891 799V811Q1891 814 1888 814H1751Z" fill="#e8e8e8"/><circle cx="1741" cy="805" r="3.600" class="sy"/>
<use href="#pf" y="830"/><text class="m" x="1821" y="834">0.000</text>
<use href="#pf" y="855"/><rect x="1751" y="846" width="69" height="18" class="u"/><text class="m" x="1821" y="859">0.500</text>
<use href="#pf" y="880"/><text class="m" x="1821" y="884">0.000</text>
<use href="#pf" y="905"/><path d="M1751 896H1888Q1891 896 1891 899V911Q1891 914 1888 914H1751Z" class="u"/><text class="m w" x="1821" y="909">1.000</text>
<use href="#pf" y="930"/><text class="m" x="1821" y="934">0.000</text>
<use href="#pf" y="955"/><text class="m" x="1821" y="959">0.000</text>
<use href="#pf" y="980"/><text class="m" x="1821" y="984">0.000</text>
<rect x="1732" y="995" width="159" height="2" fill="#2a2a2a"/>

<!-- image editor -->
<clipPath id="ie"><rect x="0" y="510" width="339" height="487" rx="4"/></clipPath>
<g clip-path="url(#ie)">
<rect y="510" width="339" height="487" fill="#454545"/>
<rect y="510" width="339" height="51" fill="#3e3e3e"/>
</g>
<rect x="9" y="514" width="30" height="18" rx="3" fill="#2c2c2c"/><rect x="13.500" y="517.500" width="13" height="13" fill="none" stroke="#ddd"/><path d="M16 518H26V523L23 523 22 530 20 524H16Z" fill="#eee"/><use href="#ch" x="33" y="523"/>
<rect x="9" y="540" width="64" height="18" rx="3" fill="#2c2c2c"/><use href="#img" x="20" y="549"/><text x="34" y="553">View</text><use href="#ch" x="67" y="550"/>
<path d="M82 543.500H96M82 549H96M82 554.500H96" stroke="#ddd" stroke-width="1.800"/>
<rect x="116" y="540" width="31" height="18" rx="3" fill="#2c2c2c"/><use href="#img" x="127" y="549"/><use href="#ch" x="140" y="550"/>
<rect x="146" y="540" width="120" height="18" rx="3" fill="#545454"/><path d="M206 540V558" stroke="#444"/><path d="M153 549H163M158 544V554" stroke="#ddd" stroke-width="1.100"/><text x="174" y="553" style="font-size:11.200px">New</text>
<path d="M211 543H217L219 545H225V556H211Z" fill="#e8e8e8"/><text x="232" y="553" style="font-size:11px">Open</text><use href="#pin" x="282" y="549"/>
<path d="M2 579 5 583 2 587" stroke="#888" fill="none"/><path d="M337 579 334 583 337 587" stroke="#888" fill="none"/>
<circle cx="316" cy="583" r="13" fill="#343434"/><circle cx="316" cy="614" r="13" fill="#343434"/><use href="#zoomi" x="316" y="583"/><use href="#hand" x="316" y="614"/>
<rect x="42" y="649" width="257" height="257" fill="#5b5b5b"/><rect x="42" y="649" width="257" height="257" fill="url(#imaj)"/><rect x="42.500" y="649.500" width="256" height="256" fill="none" stroke="#a8a8a8"/>

<!-- node editor -->
<clipPath id="ne"><rect x="342" y="510" width="1243" height="487" rx="4"/></clipPath>
<g clip-path="url(#ne)">
<rect x="342" y="510" width="1243" height="487" fill="url(#ngrid)"/>
<path d="M342 772.500H1585" stroke="#0b0b0b"/><path d="M1288.500 535V997" stroke="#0f0f0f"/>
<rect x="342" y="510" width="1243" height="25" fill="#3c3c3c"/>
</g>
<rect x="350" y="514" width="30" height="18" rx="3" fill="#2c2c2c"/><circle cx="361" cy="523" r="6.500" fill="none" stroke="#ddd"/><path d="M358 521A4 4 0 0 1 361 518" stroke="#ddd" fill="none"/><use href="#ch" x="374" y="524"/>
<rect x="387" y="514" width="86" height="18" rx="3" fill="#2c2c2c"/><use href="#obj" x="398" y="523"/><text x="412" y="527">Object</text><use href="#ch" x="468" y="524"/>
<text x="487" y="527">View</text><text x="527" y="527" style="font-size:11.200px">Select</text><text x="573" y="527" style="font-size:11.200px">Add</text><text x="607" y="527" style="font-size:11.200px">Node</text>
<rect x="648" y="518" width="10" height="10" rx="1.500" fill="#4772b3"/><path d="M650 523 652 525.500 656 520.500" fill="none" stroke="#eee" stroke-width="1.400"/><text x="661" y="527" style="font-size:11.200px">Use Nodes</text>
<rect x="781" y="514" width="76" height="18" rx="3" fill="#2c2c2c"/><text x="786" y="527">Slot 4</text><use href="#ch" x="850" y="524"/>
<rect x="867" y="514" width="27" height="18" rx="3" fill="#2c2c2c"/><use href="#mat" x="877" y="523"/><use href="#ch" x="889" y="524"/>
<rect x="894" y="514" width="120" height="18" fill="#1c1c1c"/><text x="902" y="527" style="font-size:11.200px">RoofEntrance</text>
<rect x="1014" y="514" width="84" height="18" rx="3" fill="#545454"/><path d="M1035 514V532M1059 514V532M1080 514V532" stroke="#3a3a3a"/><text class="m" x="1025" y="527">2</text><use href="#shield" x="1048" y="523"/><use href="#copy" x="1069" y="523"/><use href="#x" x="1089" y="523"/>
<use href="#pin" x="1114" y="523"/>
<rect x="1502" y="514" width="17" height="18" rx="3" fill="#434343"/><path d="M1510 527V518M1506 522 1510 518 1514 522" stroke="#777" fill="none"/>
<rect x="1527" y="514" width="18" height="18" rx="3" fill="#4a4a4a"/><path d="M1531 525A6 6 0 1 1 1540 520C1540 524 1536 524 1536 529" fill="none" stroke="#999" stroke-width="1.300"/>
<rect x="1546" y="514" width="34" height="18" rx="3" fill="#2c2c2c"/><rect x="1551" y="517" width="11" height="4" fill="#ddd"/><rect x="1551" y="525" width="11" height="4" fill="#ddd"/><use href="#ch" x="1572" y="524"/>
<path d="M343 552 346 556 343 560M1583 552 1580 556 1583 560" stroke="#777" fill="none"/>
<text x="371" y="967" class="w" style="font-size:10.700px">RoofEntrance</text>

<!-- links -->
<path class="lk" d="M628 750C648 750 646 771 666 771"/>
<path class="lk" d="M748 739C768 739 768 780 788 780"/>
<path class="lk" d="M870 735C895 735 891 813 916 813"/>
<path class="lk" d="M1056 719C1075 719 1074 664 1093 664"/>
<path class="lk" d="M1233 618C1248 618 1248 632 1263 632"/>
<path class="lk" d="M1032 900C1062 900 1063 902 1093 902"/>

<!-- Texture Coordinate -->
<rect x="546" y="730" width="82" height="136" rx="3" class="nb"/>
<path d="M546 743V733Q546 730 549 730H625Q628 730 628 733V743Z" fill="#a93143"/>
<path d="M552 735H556L554 738Z" fill="#ddd"/><text class="nt" x="559" y="738.500">Texture Coordinate</text>
<g><text class="n e" x="617" y="752.500">Generated</text><text class="n e" x="617" y="765.500">Normal</text><text class="n e" x="617" y="778.500">UV</text><text class="n e" x="617" y="791.500">Object</text><text class="n e" x="617" y="803.500">Camera</text><text class="n e" x="617" y="815.500">Window</text><text class="n e" x="617" y="828.500">Reflection</text><text class="n" x="554" y="845.500">Object:</text><text class="n" x="560" y="859.500">From Instancer</text></g>
<rect x="578" y="838" width="43" height="10" rx="2" class="nd"/><use href="#obj" transform="translate(583,843) scale(.5)"/><path d="M615 846 619 840" stroke="#ddd" stroke-width="1.500"/>
<rect x="553" y="854.500" width="4.500" height="4.500" fill="#666"/>
<g class="sp"><circle cx="628" cy="750" r="2.400"/><circle cx="628" cy="763" r="2.400"/><circle cx="628" cy="776" r="2.400"/><circle cx="628" cy="789" r="2.400"/><circle cx="628" cy="801" r="2.400"/><circle cx="628" cy="813" r="2.400"/><circle cx="628" cy="826" r="2.400"/></g>

<!-- Mapping -->
<rect x="666" y="718" width="82" height="204" rx="3" class="nb"/>
<path d="M666 731V721Q666 718 669 718H745Q748 718 748 721V731Z" fill="#6a57b8"/>
<path d="M672 722.500H676L674 725.500Z" fill="#ddd"/><text class="nt" x="679" y="727">Mapping</text>
<text class="n e" x="738" y="741.500">Vector</text>
<text class="n" x="674" y="759.500">Type:</text><rect x="696" y="752" width="46" height="9.500" rx="2" class="nd"/><text class="n" x="699" y="759.500">Point</text><use href="#ch" transform="translate(738,757) scale(.6)"/>
<text class="n" x="674" y="773.500">Vector</text><text class="n" x="674" y="785.500">Location:</text>
<g class="nr"><rect x="673" y="790" width="69" height="10.500"/><rect x="673" y="801" width="69" height="11"/><rect x="673" y="813" width="69" height="10.500"/><rect x="673" y="838" width="69" height="10.500"/><rect x="673" y="849" width="69" height="10.500"/><rect x="673" y="860" width="69" height="11"/><rect x="673" y="884" width="69" height="10.500"/><rect x="673" y="895" width="69" height="10.500"/><rect x="673" y="906" width="69" height="11"/></g>
<text class="n" x="674" y="832.500">Rotation:</text><text class="n" x="674" y="880.500">Scale:</text>
<g><text class="n m" x="683" y="797.500">X</text><text class="n m" x="683" y="809">Y</text><text class="n m" x="683" y="820.500">Z</text><text class="n e" x="732" y="797.500">0 m</text><text class="n e" x="732" y="809">0 m</text><text class="n e" x="732" y="820.500">0 m</text>
<text class="n m" x="682" y="845.500">X</text><text class="n m" x="683" y="856.500">Y</text><text class="n m" x="683" y="868">Z</text><text class="n e" x="732" y="845.500">0°</text><text class="n e" x="732" y="856.500">0°</text><text class="n e" x="732" y="868">0°</text>
<text class="n m" x="683" y="891.500">X</text><text class="n m" x="683" y="902.500">Y</text><text class="n m" x="683" y="914.500">Z</text><text class="n e" x="732" y="891.500">1.000</text><text class="n e" x="732" y="902.500">1.000</text><text class="n e" x="732" y="914.500">1.000</text></g>
<g class="sp"><circle cx="748" cy="739" r="2.400"/><circle cx="666" cy="771" r="2.400"/><circle cx="666" cy="801" r="2.400"/><circle cx="666" cy="848" r="2.400"/><circle cx="666" cy="895" r="2.400"/></g>

<!-- Noise -->
<rect x="788" y="714" width="82" height="123" rx="3" class="nb"/>
<path d="M788 726V717Q788 714 791 714H867Q870 714 870 717V726Z" fill="#bd6f2f"/>
<path d="M794 719H798L796 722Z" fill="#ddd"/><text class="nt" x="801" y="722.500">Noise Texture</text>
<text class="n e" x="859" y="737.500">Fac</text><text class="n e" x="859" y="750.500">Color</text>
<rect x="795" y="760" width="68" height="9.500" rx="2" class="nd"/><text class="n" x="798" y="767.500">3D</text><use href="#ch" transform="translate(860,765) scale(.6)"/>
<text class="n" x="796" y="782.500">Vector</text>
<g class="nr"><rect x="795" y="787" width="68" height="10.500"/><rect x="795" y="799" width="68" height="10.500"/><rect x="795" y="811.500" width="68" height="10.500"/><rect x="795" y="824" width="68" height="10.500"/></g>
<rect x="795" y="811.500" width="33" height="10.500" class="u"/>
<text class="n" x="803" y="794.500">Scale</text><text class="n" x="802" y="806.500">Detail</text><text class="n" x="799" y="819.500">Roughness</text><text class="n" x="803" y="831.500">Distortion</text>
<text class="n e" x="860" y="794.500">100.000</text><text class="n e" x="855" y="806.500">2.000</text><text class="n e" x="858" y="819.500">0.500</text><text class="n e" x="854" y="831.500">0.000</text>
<circle cx="870" cy="735" r="2.400" class="sg"/><circle cx="870" cy="748" r="2.400" class="sy"/><circle cx="788" cy="780" r="2.400" class="sp"/><g class="sg"><circle cx="788" cy="792" r="2.400"/><circle cx="788" cy="804" r="2.400"/><circle cx="788" cy="817" r="2.400"/><circle cx="788" cy="829" r="2.400"/></g>

<!-- ColorRamp -->
<rect x="916" y="698" width="140" height="124" rx="3" class="nb"/>
<path d="M916 710V701Q916 698 919 698H1053Q1056 698 1056 701V710Z" fill="#3c86b5"/>
<path d="M922 702.500H926L924 705.500Z" fill="#ddd"/><text class="nt" x="930" y="706.500">ColorRamp</text>
<text class="n e" x="1047" y="721.500">Color</text><text class="n e" x="1047" y="733.500">Alpha</text>
<path d="M925 752H931M940 752H946" stroke="#999" stroke-width=".8"/><use href="#ch" transform="translate(961,752) scale(.7)"/>
<rect x="977" y="747" width="36" height="9.500" rx="2" class="nd"/><rect x="1014" y="747" width="36" height="9.500" rx="2" class="nd"/>
<text class="n" x="980" y="754.500">RGB</text><text class="n" x="1017" y="754.500">Linear</text><use href="#ch" transform="translate(1009,752) scale(.6)"/><use href="#ch" transform="translate(1046,752) scale(.6)"/>
<rect x="927.500" y="761.500" width="118" height="11" fill="url(#ramp)" stroke="#0d0d0d"/>
<path d="M951 772V767L954 764 957 767V772Z" fill="#888" stroke="#111"/><path d="M973 772V767L976 764 979 767V772Z" fill="#999" stroke="#111"/><path d="M954 763V760" stroke="#111"/>
<rect x="923" y="779" width="35" height="9.500" rx="2" class="nr"/><rect x="965" y="779" width="85" height="9.500" rx="2" class="nr"/>
<text class="n m" x="939" y="786">0</text><text class="n" x="973" y="786">Pos</text><text class="n e" x="1041" y="786">0.223</text>
<rect x="923" y="794" width="127" height="9" rx="3" fill="#a6a6a6"/>
<text class="n" x="924" y="815.500">Fac</text>
<circle cx="1056" cy="719" r="2.400" class="sy"/><circle cx="1056" cy="731" r="2.400" class="sg"/><circle cx="916" cy="813" r="2.400" class="sg"/>

<!-- Bevel -->
<rect x="950" y="879" width="82" height="74" rx="3" class="nb"/>
<path d="M950 891V882Q950 879 953 879H1029Q1032 879 1032 882V891Z" fill="#ad2f40"/>
<path d="M956 883.500H960L958 886.500Z" fill="#ddd"/><text class="nt" x="963" y="887.500">Bevel</text>
<text class="n e" x="1022" y="902.500">Normal</text>
<rect x="957" y="912" width="68" height="10" class="nr"/><rect x="957" y="927" width="68" height="10" class="nr"/>
<text class="n" x="965" y="919.500">Samples</text><text class="n e" x="1016" y="919.500">4</text><text class="n" x="965" y="934.500">Radius</text><text class="n e" x="1016" y="934.500">0.050</text>
<text class="n" x="958" y="946.500">Normal</text>
<circle cx="1032" cy="900" r="2.400" class="sp"/><circle cx="950" cy="932" r="2.400" class="sg"/><circle cx="950" cy="944" r="2.400" class="sp"/>

<!-- Principled -->
<rect x="1093" y="598" width="140" height="338" rx="3" class="nb"/>
<path d="M1093 610V601Q1093 598 1096 598H1230Q1233 598 1233 601V610Z" fill="#2f9063"/>
<path d="M1099 602.500H1103L1101 605.500Z" fill="#ddd"/><text class="nt" x="1106" y="606.500">Principled BSDF</text>
<text class="n e" x="1222" y="620.500">BSDF</text>
<g class="nd"><rect x="1100" y="631.500" width="126" height="9.500" rx="3"/><rect x="1100" y="645.500" width="126" height="9.500" rx="3"/><rect x="1100" y="685.500" width="126" height="9.500" rx="3"/></g>
<text class="n" x="1103" y="638.500">GGX</text><text class="n" x="1103" y="652.500">Christensen-Burley</text><text class="n" x="1103" y="692.500">Subsurface Radius</text>
<use href="#ch" transform="translate(1222,636) scale(.6)"/><use href="#ch" transform="translate(1222,650) scale(.6)"/><use href="#ch" transform="translate(1222,690) scale(.6)"/>
<g class="nr"><rect x="1100" y="672" width="126" height="10"/><rect x="1100" y="711" width="126" height="10"/><rect x="1100" y="724" width="126" height="10"/><rect x="1100" y="737" width="126" height="10"/><rect x="1100" y="750" width="126" height="10"/><rect x="1100" y="763" width="126" height="10"/><rect x="1100" y="775" width="126" height="10"/><rect x="1100" y="787" width="126" height="10"/><rect x="1100" y="799" width="126" height="10"/><rect x="1100" y="812" width="126" height="10"/><rect x="1100" y="824" width="126" height="10"/><rect x="1100" y="836" width="126" height="10"/><rect x="1100" y="848" width="126" height="10"/><rect x="1100" y="861" width="126" height="10"/></g>
<g class="u"><rect x="1100" y="724" width="62" height="10"/><rect x="1100" y="750" width="126" height="10"/><rect x="1100" y="799" width="62" height="10"/><rect x="1100" y="824" width="1.500" height="10"/><rect x="1100" y="885" width="126" height="10"/></g>
<rect x="1166" y="699" width="60" height="9.500" rx="3" fill="#e8e8e8"/><rect x="1166" y="873.500" width="60" height="9.500" rx="3" fill="#050505"/>
<text class="n" x="1101" y="666.500">Base Color</text>
<text class="n" x="1104" y="679.500">Subsurface</text><text class="n e" x="1221" y="679.500">0.000</text>
<text class="n" x="1101" y="705.500">Subsurface Color</text>
<text class="n" x="1104" y="718.500">Metallic</text><text class="n e" x="1221" y="718.500">0.000</text>
<text class="n" x="1104" y="731.500">Specular</text><text class="n e" x="1221" y="731.500">0.500</text>
<text class="n" x="1104" y="744.500">Specular Tint</text><text class="n e" x="1221" y="744.500">0.000</text>
<text class="n" x="1104" y="757.500">Roughness</text><text class="n e" x="1221" y="757.500">1.000</text>
<text class="n" x="1104" y="770.500">Anisotropic</text><text class="n e" x="1221" y="770.500">0.000</text>
<text class="n" x="1104" y="782.500">Anisotropic Rotation</text><text class="n e" x="1221" y="782.500">0.000</text>
<text class="n" x="1104" y="794.500">Sheen</text><text class="n e" x="1221" y="794.500">0.000</text>
<text class="n" x="1104" y="806.500">Sheen Tint</text><text class="n e" x="1221" y="806.500">0.500</text>
<text class="n" x="1104" y="819.500">Clearcoat</text><text class="n e" x="1221" y="819.500">0.000</text>
<text class="n" x="1104" y="831.500">Clearcoat Roughness</text><text class="n e" x="1221" y="831.500">0.030</text>
<text class="n" x="1108" y="843.500">IOR</text><text class="n e" x="1217" y="843.500">1.450</text>
<text class="n" x="1104" y="855.500">Transmission</text><text class="n e" x="1221" y="855.500">0.000</text>
<text class="n" x="1104" y="868.500">Transmission Roughness</text><text class="n e" x="1221" y="868.500">0.000</text>
<text class="n" x="1101" y="880.500">Emission</text>
<text class="n" x="1104" y="892.500">Alpha</text><text class="n e" x="1221" y="892.500">1.000</text>
<text class="n" x="1101" y="904.500">Normal</text><text class="n" x="1101" y="917.500">Clearcoat Normal</text><text class="n" x="1101" y="929.500">Tangent</text>
<circle cx="1233" cy="618" r="2.400" class="sn"/>
<g class="sg"><circle cx="1093" cy="677" r="2.400"/><circle cx="1093" cy="716" r="2.400"/><circle cx="1093" cy="729" r="2.400"/><circle cx="1093" cy="742" r="2.400"/><circle cx="1093" cy="755" r="2.400"/><circle cx="1093" cy="768" r="2.400"/><circle cx="1093" cy="780" r="2.400"/><circle cx="1093" cy="792" r="2.400"/><circle cx="1093" cy="804" r="2.400"/><circle cx="1093" cy="817" r="2.400"/><circle cx="1093" cy="829" r="2.400"/><circle cx="1093" cy="841" r="2.400"/><circle cx="1093" cy="853" r="2.400"/><circle cx="1093" cy="866" r="2.400"/><circle cx="1093" cy="890" r="2.400"/></g>
<g class="sy"><circle cx="1093" cy="664" r="2.400"/><circle cx="1093" cy="703" r="2.400"/><circle cx="1093" cy="878" r="2.400"/></g>
<g class="sp"><circle cx="1093" cy="690" r="2.400"/><circle cx="1093" cy="902" r="2.400"/><circle cx="1093" cy="915" r="2.400"/><circle cx="1093" cy="927" r="2.400"/></g>

<!-- Material Output -->
<rect x="1263" y="598" width="81" height="69" rx="3" class="nb"/>
<path d="M1263 610V601Q1263 598 1266 598H1341Q1344 598 1344 601V610Z" fill="#a32f3a"/>
<path d="M1269 602.500H1273L1271 605.500Z" fill="#ddd"/><text class="nt" x="1276" y="606.500">Material Output</text>
<rect x="1269" y="613" width="68" height="10" rx="3" class="nd"/><text class="n" x="1272" y="620.500">All</text><use href="#ch" transform="translate(1333,618) scale(.6)"/>
<text class="n" x="1270" y="634.500">Surface</text><text class="n" x="1270" y="647.500">Volume</text><text class="n" x="1270" y="661.500">Displacement</text>
<circle cx="1263" cy="632" r="2.400" class="sn"/><circle cx="1263" cy="645" r="2.400" class="sn"/><circle cx="1263" cy="659" r="2.400" class="sp"/>

<!-- status bar -->
<rect y="998" width="1920" height="19" fill="#2d2d2d"/>
<use href="#mouse" x="17" y="1007"/><text class="g" x="34" y="1011">Select</text>
<use href="#mouse" x="82" y="1007"/><path d="M89 1001V1005M92 1000V1004" stroke="#bbb"/><text class="g" x="100" y="1011">Box Select</text>
<rect x="248" y="999.500" width="10" height="15" rx="4" fill="none" stroke="#cfcfcf"/><rect x="251.500" y="1002" width="3" height="6" fill="#cfcfcf"/><text class="g" x="270" y="1011">Pan View</text>
<g transform="translate(489,1007) scale(-1,1)"><use href="#mouse"/></g><text class="g" x="506" y="1011">Node Context Menu</text>
<text class="e" x="1903" y="1011" style="fill:#8f8f8f">2.90.1</text>
</svg>
</body></html>
